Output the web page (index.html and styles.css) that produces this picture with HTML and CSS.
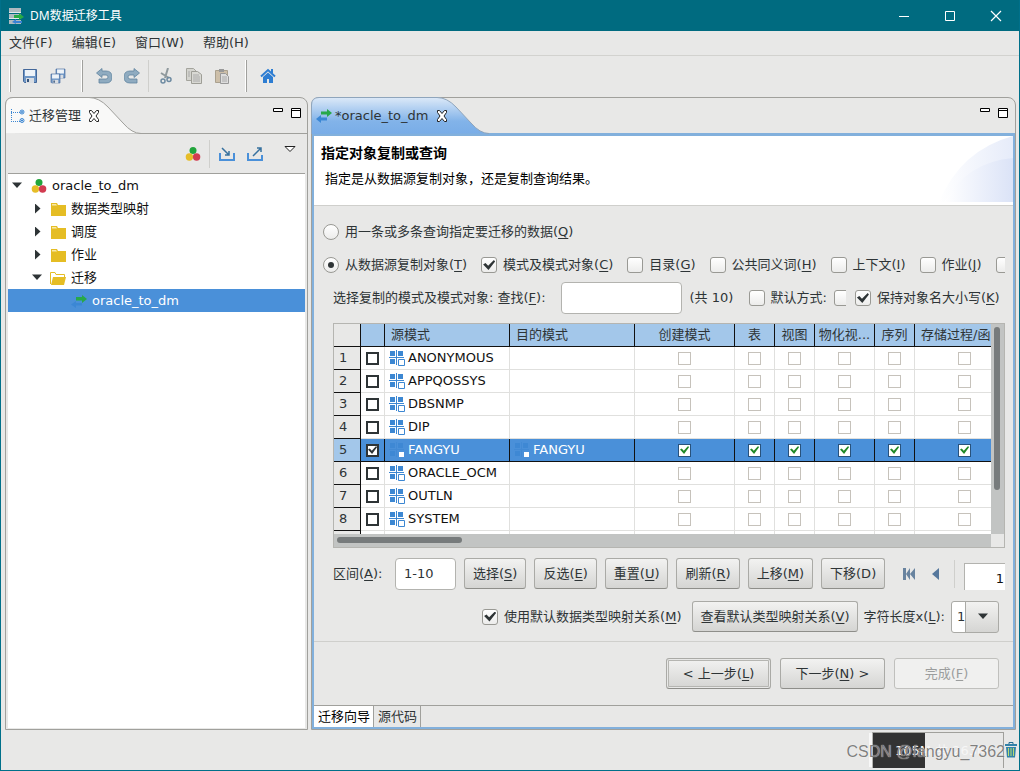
FILE: index.html
```html
<!DOCTYPE html>
<html lang="zh-CN">
<head>
<meta charset="utf-8">
<title>DM数据迁移工具</title>
<link rel="stylesheet" href="styles.css">
</head>
<body>
<svg class="defs" aria-hidden="true">
  <symbol id="i-balls" viewBox="0 0 16 16"><circle cx="8" cy="4.500" r="3.500" fill="#22a53c"/><circle cx="4.400" cy="11" r="3.700" fill="#e6bd28"/><circle cx="11.600" cy="11" r="3.700" fill="#d23b50"/></symbol>
  <symbol id="i-folder" viewBox="0 0 16 16"><path d="M1 2h6l1 2h8v11H1z" fill="#e5bd24"/><path d="M2 3h4l1 1.500H2z" fill="#f8e9a8"/></symbol>
  <symbol id="i-open" viewBox="0 0 16 16"><path d="M.5 14V2.500H5l1 2h8.500V8" fill="#fff" stroke="#e5bd24"/><path d="M3 7h13l-2 8H1z" fill="#e5bd24"/></symbol>
  <symbol id="i-swap" viewBox="0 0 16 16"><path d="M5 3.500h6V1l5 4-5 4V6.500H5z" fill="#27a84a"/><path d="M11 9.500H5V7l-5 4 5 4v-2.500h6z" fill="#3b87d5"/></symbol>
  <symbol id="i-swapsel" viewBox="0 0 16 16"><path d="M5 4h6V2l5 4-5 4V7.500H5z" fill="#27a84a"/><path d="M11 10H5V8l-5 3.500L5 15v-2.500h6z" fill="#3b87d5"/></symbol>
  <symbol id="i-schema" viewBox="0 0 16 16"><path d="M1 1h5v5H1zM9 1h5v5H9zM1 9h5v5H1z" fill="#3c87d2"/><path d="M7.500 0v15M0 7.500h15" stroke="#3c87d2"/><path d="M9.500 9.500h6v6h-6z" fill="#fff" stroke="#3c87d2"/></symbol>
  <symbol id="i-schemasel" viewBox="0 0 16 16"><path d="M1 1h5v5H1zM9 1h5v5H9zM1 9h5v5H1z" fill="#3e88d4"/><path d="M7.500 0v15M0 7.500h15" stroke="#428ad5"/><path d="M10 10h5v5h-5z" fill="#fff"/></symbol>
  <symbol id="i-x" viewBox="0 0 12 12"><path d="M1.500.5h2L6 3.500 8.500.5h2v2L8 6l2.500 3.500v2h-2L6 8.500l-2.500 3h-2v-2L4 6 1.500 2.500z" fill="#fff" stroke="#222"/></symbol>
  <symbol id="i-min" viewBox="0 0 10 10"><path d="M.5.5h9v3h-9z" fill="#fff" stroke="#000"/></symbol>
  <symbol id="i-max" viewBox="0 0 10 10"><path d="M.5.5h9v9h-9zM0 2.500h10" fill="#fff" stroke="#000"/></symbol>
  <symbol id="i-floppy" viewBox="0 0 16 16"><path d="M1.500 1.500h13v13h-12l-1-1z" fill="#6f97c6" stroke="#44689a"/><path d="M3 2h10v6H3z" fill="#eef3f8"/><path d="M4 10h8v5H4z" fill="#d9dde2"/><path d="M5 11h2v3H5z" fill="#34537b"/></symbol>
  <symbol id="i-undo" viewBox="0 0 16 16"><path d="M6 .5.500 5 6 9.500V7h4q2 0 2 2t-2 2H3v4h7q6 0 6-6t-6-6H6z" fill="#8fabc0" stroke="#5f84a0" stroke-width=".8"/></symbol>
</svg>

<header class="titlebar">
  <svg class="ic" viewBox="0 0 16 16"><path d="M1 0h12v4H1zM1 6h12v4H1zM1 12h12v4H1z" fill="#aebac0"/><path d="M1 4h12v1H1zM1 10h12v1H1z" fill="#e4eaec"/><path d="M6 7h5V5l5 4-5 3v-2H6z" fill="#28ac45"/><path d="M14 13H8v-2l-4 3 4 2v-1h6z" fill="#3982d4"/></svg>
  <h1>DM数据迁移工具</h1>
  <div class="winbtns">
    <button aria-label="最小化"><svg viewBox="0 0 12 12"><path d="M1 6.500h10" stroke="#fff"/></svg></button>
    <button aria-label="最大化"><svg viewBox="0 0 12 12"><path d="M1.500 1.500h9v9h-9z" fill="none" stroke="#fff"/></svg></button>
    <button aria-label="关闭"><svg viewBox="0 0 12 12"><path d="m1 1 10 10M11 1 1 11" stroke="#fff" stroke-width="1.200"/></svg></button>
  </div>
</header>

<nav class="menubar">
  <button>文件(F)</button><button>编辑(E)</button><button>窗口(W)</button><button>帮助(H)</button>
</nav>

<div class="toolbar">
  <div class="group">
    <button aria-label="保存"><svg class="ic"><use href="#i-floppy"/></svg></button>
    <button aria-label="全部保存"><svg class="ic" viewBox="0 0 16 16"><use href="#i-floppy" x="5" y="0" width="11" height="11"/><use href="#i-floppy" x="0" y="5" width="11" height="11"/></svg></button>
  </div>
  <div class="group">
    <button aria-label="撤销"><svg class="ic"><use href="#i-undo"/></svg></button>
    <button aria-label="重做"><svg class="ic flip"><use href="#i-undo"/></svg></button>
    <span class="sep"></span>
    <button aria-label="剪切"><svg class="ic" viewBox="0 0 16 16" fill="none"><path d="M10 0 7 10M3 5l8 5" stroke="#8f999d" stroke-width="2"/><circle cx="5" cy="13" r="2" stroke="#6e8ba2" stroke-width="1.500"/><circle cx="11" cy="11.500" r="2" stroke="#6e8ba2" stroke-width="1.500"/></svg></button>
    <button aria-label="复制"><svg class="ic" viewBox="0 0 16 16"><path d="M.5.500h7l3 3v9H.5z" fill="#d4d4cf" stroke="#a4a49d"/><path d="M5.500 3.500h6l4 3v9h-10z" fill="#d9d9d4" stroke="#9e9e97"/><path d="M7 7h6M7 9h7M7 11h7M7 13h7M2 4h2M2 6h2M2 8h2" stroke="#aaa"/></svg></button>
    <button aria-label="粘贴"><svg class="ic" viewBox="0 0 16 16"><path d="M1.500 2.500h12v12h-12z" fill="#cdbfa9" stroke="#aaa18f"/><path d="M5 1h5v3H5z" fill="#999"/><path d="M6.500 5.500h5l3 3v7h-8z" fill="#ddd" stroke="#999"/><path d="M8 9h5M8 11h5M8 13h5" stroke="#aaa"/></svg></button>
  </div>
  <div class="group">
    <button aria-label="主页"><svg class="ic" viewBox="0 0 16 16"><path d="M1 8.500 8 2l7 6.500" fill="none" stroke="#2d7dd2" stroke-width="2"/><path d="M3 9l5-4.500L13 9v6H9v-4H7v4H3zM11 1h2v4h-2z" fill="#2d7dd2"/></svg></button>
  </div>
</div>

<main class="work">
  <section class="panel side">
    <div class="tabs">
      <svg class="tabshape" viewBox="0 0 136 37"><path d="M.5 37V8Q.5.500 8 .5H84Q94 .5 103 10L118 26Q127 36.500 136 36.500" fill="#fcfcfc" fill-opacity=".8" stroke="#a0a09c"/></svg>
      <svg class="ic" viewBox="0 0 16 16" fill="none" stroke="#3c87d2"><path d="M1.500 1v13M1 4.500h9M1 13.500h9" stroke-dasharray="1 1"/><circle cx="12" cy="4" r="2"/><circle cx="12" cy="12.500" r="2"/><path d="M11 4h2M12 3v2M11 12.500h2M12 11.500v2"/></svg>
      <span>迁移管理</span>
      <button class="close" aria-label="关闭"><svg><use href="#i-x"/></svg></button>
      <button class="mm push" aria-label="最小化"><svg><use href="#i-min"/></svg></button>
      <button class="mm" aria-label="最大化"><svg><use href="#i-max"/></svg></button>
    </div>
    <div class="sidebar-tools">
      <button aria-label="新建"><svg class="ic"><use href="#i-balls"/></svg></button>
      <span class="sep"></span>
      <button aria-label="导入"><svg class="ic" viewBox="0 0 16 16" fill="none" stroke="#4a90d9" stroke-width="2"><path d="M1 7v7h14V7"/><path d="m3 2 7 7M10 5v4H6" stroke="#37719f" stroke-width="1.500"/></svg></button>
      <button aria-label="导出"><svg class="ic" viewBox="0 0 16 16" fill="none" stroke="#4a90d9" stroke-width="2"><path d="M1 7v7h14V9"/><path d="m6 10 8-8M10 2h4v4" stroke="#37719f" stroke-width="1.500"/></svg></button>
      <button class="drop" aria-label="视图菜单"><svg viewBox="0 0 12 7"><path d="M1 .5h10L6 5.500z" fill="#fff" stroke="#222"/></svg></button>
    </div>
    <ul class="tree">
      <li class="l0"><i class="down"></i><svg class="ic"><use href="#i-balls"/></svg>oracle_to_dm</li>
      <li class="l1"><i class="right"></i><svg class="ic"><use href="#i-folder"/></svg>数据类型映射</li>
      <li class="l1"><i class="right"></i><svg class="ic"><use href="#i-folder"/></svg>调度</li>
      <li class="l1"><i class="right"></i><svg class="ic"><use href="#i-folder"/></svg>作业</li>
      <li class="l1"><i class="down"></i><svg class="ic"><use href="#i-open"/></svg>迁移</li>
      <li class="l2 on"><svg class="ic"><use href="#i-swapsel"/></svg>oracle_to_dm</li>
    </ul>
  </section>

  <section class="panel editor">
    <div class="tabs">
      <svg class="tabshape wide" viewBox="0 0 178 37"><defs><linearGradient id="tg" x2="0" y2="1"><stop offset="0" stop-color="#dce9f8"/><stop offset=".65" stop-color="#82b3e9"/><stop offset="1" stop-color="#79ade7"/></linearGradient></defs><path d="M.5 37V8Q.5.500 8 .5H126Q136 .5 145 10L160 26Q169 36.500 178 36.500" fill="url(#tg)" stroke="#8fa5bc"/></svg>
      <svg class="ic"><use href="#i-swap"/></svg>
      <span>*oracle_to_dm</span>
      <button class="close" aria-label="关闭"><svg><use href="#i-x"/></svg></button>
      <button class="mm push" aria-label="最小化"><svg><use href="#i-min"/></svg></button>
      <button class="mm" aria-label="最大化"><svg><use href="#i-max"/></svg></button>
    </div>
    <div class="frame">
      <div class="banner">
        <div><h2>指定对象复制或查询</h2><p>指定是从数据源复制对象，还是复制查询结果。</p></div>
        <svg class="swoosh" viewBox="0 0 74 66"><defs><linearGradient id="sg"><stop offset="0" stop-color="#fff"/><stop offset="1" stop-color="#dbe3f7"/></linearGradient></defs><path d="M0 66Q22 14 74 0V66z" fill="url(#sg)" opacity=".7"/><path d="M5 66Q28 26 74 22V66z" fill="url(#sg)"/></svg>
      </div>

      <form class="wizard">
        <div class="row r1"><label><input type="radio" name="mode">用一条或多条查询指定要迁移的数据(<u>Q</u>)</label></div>
        <div class="row r2">
          <label><input type="radio" name="mode" checked>从数据源复制对象(<u>T</u>)</label>
          <label><input type="checkbox" checked>模式及模式对象(<u>C</u>)</label>
          <label><input type="checkbox">目录(<u>G</u>)</label>
          <label><input type="checkbox">公共同义词(<u>H</u>)</label>
          <label><input type="checkbox">上下文(<u>I</u>)</label>
          <label><input type="checkbox">作业(<u>J</u>)</label>
          <label><input type="checkbox" aria-label="更多"></label>
        </div>
        <div class="row r3">
          <label for="find">选择复制的模式及模式对象: 查找(<u>F</u>):</label>
          <input class="text find" id="find" type="text">
          <span class="total">(共 10)</span>
          <label><input type="checkbox">默认方式:</label>
          <span class="cut"><input type="checkbox" aria-label="方式"></span>
          <label class="keep"><input type="checkbox" checked>保持对象名大小写(<u>K</u>)</label>
        </div>

        <div class="gridbox">
          <div class="gridview">
            <table>
              <colgroup><col class="c-n"><col class="c-c"><col class="c-s"><col class="c-s"><col class="c-m"><col class="c-t"><col class="c-t"><col class="c-v"><col class="c-t"><col class="c-m"></colgroup>
              <thead><tr><th></th><th></th><th class="lt">源模式</th><th class="lt">目的模式</th><th>创建模式</th><th>表</th><th>视图</th><th>物化视...</th><th>序列</th><th class="lt">存储过程/函</th></tr></thead>
              <tbody id="rows"></tbody>
            </table>
          </div>
          <div class="vbar"><i></i></div>
          <div class="hbar"><i></i></div>
          <div class="corner"></div>
        </div>

        <div class="row r4">
          <label for="range">区间(<u>A</u>):</label>
          <input class="text range" id="range" type="text" value="1-10">
          <button type="button">选择(<u>S</u>)</button>
          <button type="button">反选(<u>E</u>)</button>
          <button type="button">重置(<u>U</u>)</button>
          <button type="button">刷新(<u>R</u>)</button>
          <button type="button">上移(<u>M</u>)</button>
          <button type="button">下移(D)</button>
          <span class="pager">
            <button type="button" class="flat" aria-label="首页"><svg class="nav" viewBox="0 0 14 14"><path d="M1 1h3v12H1zM8 1v12L4 7zM13 1v12L8 7z" fill="#68839f"/></svg></button>
            <button type="button" class="flat" aria-label="上一页"><svg class="nav" viewBox="0 0 14 14"><path d="M10 1v12L3 7z" fill="#56789d"/></svg></button>
            <span class="sep"></span>
            <input class="page" type="text" value="1" aria-label="页码">
          </span>
        </div>
        <div class="row r5">
          <label><input type="checkbox" checked>使用默认数据类型映射关系(<u>M</u>)</label>
          <button type="button" class="map">查看默认类型映射关系(<u>V</u>)</button>
          <label for="len">字符长度x(<u>L</u>):</label>
          <span class="combo"><select id="len"><option>1</option></select><i class="down"></i></span>
        </div>
        <div class="footer">
          <button type="button" class="focus">&lt; 上一步(<u>L</u>)</button>
          <button type="button">下一步(<u>N</u>) &gt;</button>
          <button type="button" disabled>完成(<u>F</u>)</button>
        </div>
      </form>
      <div class="bottomtabs"><button class="act">迁移向导</button><button>源代码</button></div>
    </div>
  </section>
</main>

<footer class="status">
  <div class="heap"><div class="used"></div><span>105M 共 263M</span></div>
  <button class="trash" aria-label="垃圾回收"><svg viewBox="0 0 12 16"><path d="M4 2V.5h4V2" fill="none" stroke="#246b91"/><path d="M0 2h12v2H0zM1 5h10l-1 10.500H2z" fill="#3382a8"/><path d="M3.500 6v8M6 6v8M8.500 6v8" stroke="#b9dc70"/></svg></button>
  <span class="mark">CSDN @fangyu_7362</span>
</footer>
<script src="app.js"></script>
</body>
</html>
```
FILE: styles.css
```css
* { box-sizing: border-box; }
body {
  margin: 0;
  height: 100vh;
  display: flex;
  flex-direction: column;
  border: 1px solid #00708a;
  border-top: 0;
  background: #e8e8e7;
  color: #2e3436;
  font: 13px/20px "DejaVu Sans", "Noto Sans CJK SC", sans-serif;
  overflow: hidden;
  white-space: nowrap;
}
button, input, select { font: inherit; color: inherit; margin: 0; }
button { border: 0; background: none; padding: 0; }
svg { display: block; flex: none; }
.defs { position: absolute; width: 0; height: 0; }
.ic { width: 16px; height: 16px; }
.flip { transform: scaleX(-1); }
.sep { width: 1px; background: #cfcfcc; align-self: stretch; }

.titlebar { display: flex; align-items: center; height: 31px; flex: none; background: #006b80; color: #fff; padding-left: 7px; gap: 6px; }
.titlebar h1 { font: 12px/20px "Noto Sans", "Noto Sans CJK SC", sans-serif; margin: 0; }
.winbtns { display: flex; margin-left: auto; }
.winbtns button { width: 46px; height: 30px; display: grid; place-items: center; }
.winbtns svg { width: 12px; height: 12px; }

.menubar { display: flex; flex: none; height: 25px; padding-left: 8px; gap: 19px; border-bottom: 1px solid #d2d2cf; }

.toolbar { display: flex; flex: none; height: 41px; padding: 4px 8px; }
.group { display: flex; align-items: center; gap: 12px; padding: 0 15px 0 12px; border-left: 1px solid #fff; border-right: 0; box-shadow: inset 1px 0 #a0a09d; height: 32px; }
.group + .group { padding-left: 14px; }
.group .sep { margin: 0 -3px 0 -4px; }

.work { flex: 1; min-height: 0; display: flex; gap: 3px; padding: 0 3px 0 4px; }
.panel { display: flex; flex-direction: column; border: 1px solid #a0a09c; border-radius: 8px 8px 0 0; }
.side { width: 303px; flex: none; padding: 0 2px 1px; }
.editor { flex: 1; min-width: 0; }
.tabs { position: relative; height: 36px; flex: none; display: flex; align-items: center; gap: 3px; border-bottom: 1px solid #a0a09c; padding: 0 5px 0 4px; margin: 0 -2px; }
.tabs > * { position: relative; }
.tabs .tabshape { position: absolute; left: -1px; top: -1px; width: 136px; height: 37px; }
.tabs .tabshape.wide { width: 178px; }
.tabs .close { margin-left: 4px; }
.tabs .close svg { width: 12px; height: 12px; }
.tabs .mm { align-self: flex-start; margin-top: 10px; margin-right: 1px; }
.tabs .mm + .mm { margin-left: 4px; }
.tabs .push { margin-left: auto; }
.mm svg { width: 10px; height: 10px; }
.editor .tabs { height: 35px; margin: 0; padding: 0 6px 0 4px; border-bottom: 0; }

.sidebar-tools { height: 39px; flex: none; display: flex; align-items: center; justify-content: flex-end; gap: 12px; padding: 0 9px 0 0; }
.sidebar-tools .sep { height: 28px; align-self: center; margin: 0 -3px 0 -4px; }
.drop { align-self: flex-start; margin: 12px 0 0 9px; }
.drop svg { width: 12px; height: 7px; }
.tree { flex: 1; list-style: none; margin: 0; padding: 0; background: #fff; border-top: 1px solid #a0a09c; color: #111; }
.tree li { height: 23px; display: flex; align-items: center; gap: 5px; }
.l0 { padding-left: 4px; }
.l0 .ic { margin-left: 4px; }
.l1 { padding-left: 24px; }
.l1 .ic { margin-left: 3px; }
.l2 { padding-left: 63px; }
.on { background: #4a90d9; color: #fff; }
i.down, i.right { display: block; flex: none; width: 10px; height: 10px; background: #2e3436; }
i.down { clip-path: polygon(0 20%, 100% 20%, 50% 75%); }
i.right { clip-path: polygon(30% 0, 85% 50%, 30% 100%); }

.frame { flex: 1; min-height: 0; display: flex; flex-direction: column; border: 2px solid #82b0dc; border-top-width: 3px; }
.banner { height: 70px; flex: none; display: flex; justify-content: space-between; background: #fff; border-bottom: 1px solid #cfcfcc; color: #000; }
.banner h2 { font-size: 14px; line-height: 20px; font-weight: 700; margin: 7px 0 0 7px; }
.banner p { margin: 6px 0 0 11px; }
.swoosh { width: 74px; height: 66px; }

.wizard { flex: 1; display: flex; flex-direction: column; min-height: 0; }
.row { display: flex; align-items: center; flex: none; overflow: hidden; }
.row label { display: flex; align-items: center; flex: none; }
.row u, button u { text-underline-offset: 2px; }
input[type=radio], input[type=checkbox] {
  appearance: none; flex: none;
  width: 16px; height: 16px; margin: 0 6px 0 0;
  border: 1px solid #999994; border-radius: 3px;
  background: linear-gradient(#fff, #ececeb);
  display: grid; place-items: center;
}
input[type=radio] { border-radius: 50%; }
input[type=radio]:checked::before { content: ""; width: 6px; height: 6px; border-radius: 50%; background: #2e3436; }
input[type=checkbox]:checked::before { content: ""; width: 12px; height: 10px; background: #2e3436; clip-path: polygon(0 45%, 20% 30%, 42% 58%, 90% 0, 100% 15%, 45% 100%); }
.r1 { height: 35px; padding: 10px 0 0 9px; margin-top: 3px; }
.r2 { height: 32px; padding-left: 9px; gap: 14px; margin: 5px 8px 0 0; }
.r3 { height: 32px; padding-left: 19px; margin: 1px 8px 0 0; }
.text { border: 1px solid #b3b3af; border-radius: 4px; background: #fff; height: 32px; padding: 0 8px; }
.find { width: 121px; margin-left: 15px; }
.total { flex: none; width: 67px; padding-left: 8px; }
.cut { width: 12px; overflow: hidden; margin: 0 9px 0 7px; }
.keep { margin-right: auto; }

.gridbox { margin: 9px 8px 0 19px; height: 225px; flex: none; display: grid; grid-template: 1fr 13px / 1fr 13px; border: 1px solid #b5b5b1; }
.gridview { overflow: hidden; background: #fff; min-width: 0; }
table { table-layout: fixed; width: 681px; border-collapse: separate; border-spacing: 0; }
.c-n { width: 27px; } .c-c { width: 24px; } .c-s { width: 125px; } .c-m { width: 100px; } .c-t { width: 40px; } .c-v { width: 60px; }
th, td { height: 23px; padding: 0; line-height: 20px; border-right: 1px solid #e0e0de; border-bottom: 1px solid #e0e0de; }
thead th { font-weight: 400; background: #a3c7ea; border-color: #111; text-align: center; overflow: hidden; }
thead th:first-child { background: #e8e8e7; border-color: #111; }
thead th.lt { text-align: left; padding-left: 6px; }
tbody th { font-weight: 400; text-align: left; padding-left: 5px; background: #e8e8e7; border-color: #111; }
td { color: #111; }
td .name { display: flex; align-items: center; gap: 3px; padding-left: 4px; }
td input[type=checkbox] { width: 13px; height: 13px; margin: 0 auto; border: 1px solid #c6c2bb; border-radius: 0; background: #fff; }
td.pick input[type=checkbox] { border: 2px solid #2e3436; margin: 0 0 0 5px; }
td input[type=checkbox]:checked::before { width: 9px; height: 8px; background: #218a28; }
td.pick input[type=checkbox]:checked::before { background: #2e3436; }
tr.sel td { background: #4a90d9; color: #fff; border-color: #111; }
tr.sel td input { border-color: #28527c; }
tr.sel th { background: #a3c7ea; }
.vbar { background: #c2c4c3; padding: 3px; }
.vbar i { display: block; width: 6px; height: 163px; border-radius: 3px; background: #777b7c; }
.hbar { background: #c2c4c3; padding: 3px; }
.hbar i { display: block; width: 125px; height: 6px; border-radius: 3px; background: #777b7c; }

.r4 { height: 33px; padding-left: 19px; margin: 9px 8px 0 0; gap: 8px; }
.r4 label { width: 54px; }
.range { width: 61px; flex: none; }
.row button, .footer button {
  height: 31px; padding: 0 8px; flex: none;
  border: 1px solid #aaaaa6; border-bottom-color: #8e8e8a; border-radius: 3px;
  background: linear-gradient(#f2f2f1, #d5d5d3);
}
.row .flat { border: 0; background: none; padding: 0; }
.nav { width: 14px; height: 14px; }
.pager { display: flex; align-items: center; gap: 13px; margin-left: 9px; flex: 1; min-width: 0; }
.pager .sep { height: 28px; align-self: center; margin-left: -2px; }
.page { flex: 1; min-width: 0; width: 40px; height: 27px; margin: 6px 0 0 -4px; border: 1px solid #b3b3af; border-width: 1px 0 0 1px; background: #fff; text-align: right; padding: 3px 1px 0; color: #111; }
.r5 { height: 33px; margin: 10px 14px 0 0; justify-content: flex-end; gap: 6px; }
.row .map { padding: 0 7px; margin-left: 5px; }
.combo { position: relative; display: flex; align-items: center; width: 48px; height: 32px; border: 1px solid #aaaaa6; border-radius: 3px; overflow: hidden; background: linear-gradient(90deg, #fff 13px, #aaaaa6 13px 14px, transparent 14px), linear-gradient(#f2f2f1, #d5d5d3); }
.combo select { appearance: none; width: 14px; height: 30px; border: 0; background: none; padding: 0 0 0 5px; }
.combo i.down { position: absolute; right: 10px; pointer-events: none; }
.footer { display: flex; justify-content: flex-end; gap: 9px; padding: 16px 14px 0; margin-top: 8px; border-top: 1px solid #cfcfcc; flex: 1; }
.footer button { width: 105px; }
.footer .focus { box-shadow: inset 0 0 0 1px #e8e8e7, inset 0 0 0 2px #b5b5b1; }
.footer button:disabled { color: #9b9d9d; background: #f0f0ef; border-color: #c0c0bd; }
.bottomtabs { display: flex; flex: none; height: 22px; border-top: 1px solid #a0a09c; }
.bottomtabs button { padding: 0 3px 0 4px; border-right: 1px solid #a0a09c; }
.bottomtabs .act { background: #fff; color: #000; }

.status { position: relative; flex: none; height: 40px; display: flex; justify-content: flex-end; align-items: center; padding: 2px 1px 2px 0; }
.heap { position: relative; width: 132px; height: 36px; display: flex; border-top: 1px solid #a0a09c; border-right: 1px solid #a0a09c; border-left: 1px solid #b5b5b1; box-shadow: -4px 0 0 -1px #f8f8f8; }
.used { width: 40%; background: #333; }
.heap span { position: absolute; left: 22px; top: 8px; color: #f6f6f6; }
.trash { width: 14px; display: grid; place-items: center; }
.trash svg { width: 12px; height: 16px; }
.mark { position: absolute; right: 14px; top: 12px; color: rgba(105, 105, 105, .85); text-shadow: 0 0 1px #fff; font: 16px/20px "Liberation Sans", sans-serif; }
```
FILE: app.js
```js
const names = ["ANONYMOUS", "APPQOSSYS", "DBSNMP", "DIP", "FANGYU", "ORACLE_OCM", "OUTLN", "SYSTEM", ""];
const cell = (name, sel) =>
  `<td>${name ? `<span class="name"><svg class="ic"><use href="#i-schema${sel ? "sel" : ""}"/></svg>${name}</span>` : ""}</td>`;
document.getElementById("rows").innerHTML = names.map((name, i) => {
  const sel = name === "FANGYU";
  const on = sel ? " checked" : "";
  const box = `<input type="checkbox" aria-label="${name}"${on}>`;
  return `<tr class="${sel ? "sel" : ""}"><th>${name ? i + 1 : ""}</th><td class="pick">${name ? box : ""}</td>` +
    cell(name, sel) + cell(sel ? name : "", sel) + `<td>${name ? box : ""}</td>`.repeat(6) + "</tr>";
}).join("");
```
